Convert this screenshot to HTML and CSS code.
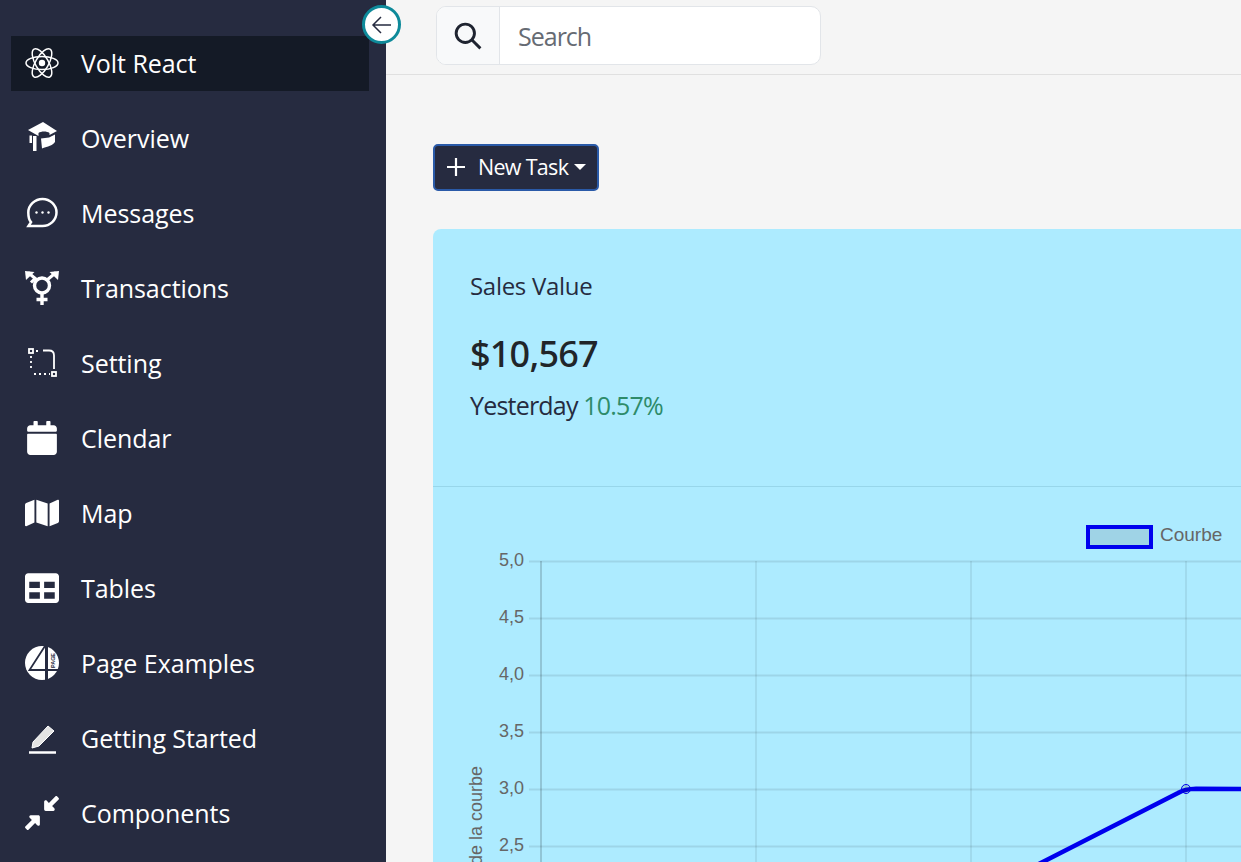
FILE: index.html
```html
<!DOCTYPE html>
<html lang="en">
<head>
  <meta charset="UTF-8" />
  <meta name="viewport" content="width=device-width, initial-scale=1.0" />
  <title>Volt React</title>
  <link rel="stylesheet" href="styles.css">
</head>
<body>

  <aside class="sidebar">
    <button class="sidebar-toggle" aria-label="Collapse">
      <svg viewBox="0 0 24 24" width="24" height="24" fill="none" stroke="#262b40" stroke-width="1.5">
        <path d="M21 12H3M11 4l-8 8 8 8" />
      </svg>
    </button>

    <nav class="nav-list">
      <a class="nav-item active" href="#">
        <svg class="nav-icon" viewBox="0 0 34 34" fill="none" stroke="#fff" stroke-width="1.5">
          <ellipse cx="17" cy="17" rx="16" ry="6.500" />
          <ellipse cx="17" cy="17" rx="16" ry="6.500" transform="rotate(60 17 17)" />
          <ellipse cx="17" cy="17" rx="16" ry="6.500" transform="rotate(120 17 17)" />
          <circle cx="17" cy="17" r="3.200" fill="#fff" stroke="none" />
        </svg>
        Volt React
      </a>
      <a class="nav-item" href="#">
        <svg class="nav-icon" viewBox="0 0 34 34" fill="#fff">
          <path d="M3 9L18 1 32 10 24.500 14V12C22 10 16 10 13.500 12V15z" />
          <path d="M16 17.500L24 16.500 30 13.500V21C26 26 20 26 17 27.500z" />
          <path d="M8 15h3.500v15H8z" />
          <path d="M4.500 14.500H7V22H4.500z" />
        </svg>
        Overview
      </a>
      <a class="nav-item" href="#">
        <svg class="nav-icon" viewBox="0 0 34 34" fill="none" stroke="#fff" stroke-width="2.500">
          <path d="M17.500 3C25 3 31.500 9 31.500 16.500S25 30 17.500 30H3.500l2.500-3.800C4 24 3.300 20.500 3.300 16.500 3.300 9 10 3 17.500 3z" />
          <g fill="#fff" stroke="none">
            <circle cx="11.500" cy="16.500" r="1.200" />
            <circle cx="17.500" cy="16.500" r="1.200" />
            <circle cx="23.500" cy="16.500" r="1.200" />
          </g>
        </svg>
        Messages
      </a>
      <a class="nav-item" href="#">
        <svg class="nav-icon" viewBox="0 0 34 34" fill="none" stroke="#fff" stroke-width="3.400">
          <circle cx="17" cy="14.500" r="7.500" />
          <path d="M17 22V34M11.500 28.500h11" />
          <path d="M12 9L3 1.500M22 9L31 1.500" stroke-width="3" />
          <path d="M6 11.500L11 6.500" stroke-width="3" />
          <g fill="#fff" stroke="none">
            <path d="M0 0L9.500 1 1 9z" />
            <path d="M34 0L24.500 1 33 9z" />
          </g>
        </svg>
        Transactions
      </a>
      <a class="nav-item" href="#">
        <svg class="nav-icon" viewBox="0 0 34 34" fill="none" stroke="#fff" stroke-width="1.800">
          <rect x="4" y="3" width="4" height="4" />
          <rect x="27" y="26" width="4" height="4" />
          <path d="M6 10v15" stroke-dasharray="2 3" />
          <path d="M9 28h16" stroke-dasharray="2 3" />
          <path d="M11 5h4" stroke-dasharray="2 3" />
          <path d="M18 4.500h6c3 0 5 2 5 5V23" />
        </svg>
        Setting
      </a>
      <a class="nav-item" href="#">
        <svg class="nav-icon" viewBox="0 0 448 512" fill="#fff">
          <path d="M12 192h424c6.600 0 12 5.400 12 12v260c0 26.500-21.500 48-48 48H48c-26.500 0-48-21.500-48-48V204c0-6.600 5.400-12 12-12zm436-44v-36c0-26.500-21.500-48-48-48h-48V12c0-6.600-5.400-12-12-12h-40c-6.600 0-12 5.400-12 12v52H160V12c0-6.600-5.400-12-12-12h-40c-6.600 0-12 5.400-12 12v52H48C21.500 64 0 85.500 0 112v36c0 6.600 5.400 12 12 12h424c6.600 0 12-5.400 12-12z" />
        </svg>
        Clendar
      </a>
      <a class="nav-item" href="#">
        <svg class="nav-icon" viewBox="0 0 576 512" fill="#fff">
          <path d="M0 117.660v346.320c0 11.320 11.430 19.060 21.940 14.860L160 416V32L20.120 87.950A32.006 32.006 0 0 0 0 117.660zM192 416l192 64V96L192 32v384zM554.060 33.160L416 96v384l139.880-55.950A31.996 31.996 0 0 0 576 394.340V48.020c0-11.320-11.430-19.060-21.940-14.860z" />
        </svg>
        Map
      </a>
      <a class="nav-item" href="#">
        <svg class="nav-icon" viewBox="0 0 512 512" fill="#fff">
          <path d="M464 32H48C21.490 32 0 53.490 0 80v352c0 26.510 21.490 48 48 48h416c26.510 0 48-21.490 48-48V80c0-26.510-21.490-48-48-48zM224 416H64v-96h160v96zm0-160H64v-96h160v96zm224 160H288v-96h160v96zm0-160H288v-96h160v96z" />
        </svg>
        Tables
      </a>
      <a class="nav-item" href="#">
        <svg class="nav-icon" viewBox="0 0 34 34">
          <circle cx="17" cy="17" r="17" fill="#fff" />
          <path d="M20 0L4.500 24H34" fill="none" stroke="#262b40" stroke-width="1.800" />
          <path d="M21.500 0V34" fill="none" stroke="#262b40" stroke-width="3" />
          <text class="page-mark" transform="translate(30 22) rotate(-90)">PAGE</text>
        </svg>
        Page Examples
      </a>
      <a class="nav-item" href="#">
        <svg class="nav-icon" viewBox="0 0 34 34">
          <path d="M8 21L23 5l6 5-15 15-7 2z" fill="#e4e4e4" stroke="#fff" stroke-width="1" />
          <path d="M4 31.500h27" stroke="#fff" stroke-width="2.500" />
        </svg>
        Getting Started
      </a>
      <a class="nav-item" href="#">
        <svg class="nav-icon" viewBox="0 0 512 512" fill="#fff">
          <path d="M200 288H88c-21.400 0-32.100 25.800-17 41l32.900 31-99.200 99.300c-6.200 6.200-6.200 16.400 0 22.600l25.400 25.400c6.200 6.200 16.400 6.200 22.600 0L152 408l31.100 33c15.100 15.100 40.900 4.400 40.900-17V312c0-13.300-10.700-24-24-24zm112-64h112c21.400 0 32.100-25.900 17-41l-33-31 99.300-99.300c6.200-6.200 6.200-16.400 0-22.600L481.900 4.700c-6.200-6.200-16.400-6.200-22.600 0L360 104l-31.100-33C313.800 55.900 288 66.600 288 88v112c0 13.300 10.700 24 24 24z" />
        </svg>
        Components
      </a>
    </nav>
  </aside>

  <main class="main">
    <header class="topbar">
      <div class="search">
        <span class="search-addon">
          <svg viewBox="0 0 26 26" width="28" height="28" fill="none" stroke="#1f2430" stroke-width="2.700">
            <circle cx="10.500" cy="10.500" r="8.500" />
            <path d="M16.500 16.500l8 8" />
          </svg>
        </span>
        <input class="search-input" type="text" placeholder="Search">
      </div>
    </header>

    <div class="content">
      <button class="task-btn">
        <svg viewBox="0 0 20 20" width="20" height="20" fill="none" stroke="#fff" stroke-width="2.200">
          <path d="M10 1v18M1 10h18" />
        </svg>
        <span class="task-label">New Task</span>
        <span class="caret"></span>
      </button>

      <section class="card">
        <div class="card-head">
          <h2 class="card-title">Sales Value</h2>
          <div class="card-value">$10,567</div>
          <div class="card-note">Yesterday <span class="up">10.57%</span></div>
        </div>

        <svg class="chart" viewBox="433 487 828 375" width="828" height="375">
          <g class="grid">
            <path d="M529 561.500H1261M529 618.500H1261M529 675.500H1261M529 732.500H1261M529 789.500H1261M529 846.500H1261" />
            <path class="grid-v" d="M756 561V862M971 561V862M1186 561V862" />
            <path class="axis" d="M541 561V862" />
          </g>
          <g class="ticks">
            <text x="524" y="566">5,0</text>
            <text x="524" y="623">4,5</text>
            <text x="524" y="680">4,0</text>
            <text x="524" y="737">3,5</text>
            <text x="524" y="794">3,0</text>
            <text x="524" y="851">2,5</text>
          </g>
          <text class="axis-title" transform="translate(482 766) rotate(-90)">Valeur de la courbe</text>
          <rect class="legend-box" x="1088" y="527" width="63" height="20" />
          <text class="legend-label" x="1160" y="541">Courbe</text>
          <path class="curve" d="M1029 869L1178 793C1183 790 1187 789 1196 788.800L1261 789" />
          <circle class="point" cx="1186" cy="789" r="4.500" />
        </svg>
      </section>
    </div>
  </main>

</body>
</html>
```

FILE: styles.css
```css
html, body {
  height: 100%;
}
body {
  margin: 0;
  font-family: 'Open Sans', 'Noto Sans', sans-serif;
  background: #f5f5f5;
  display: flex;
  overflow: hidden;
  color: #262b40;
}
.sidebar {
  position: relative;
  flex: 0 0 386px;
  box-sizing: border-box;
  padding: 36px 17px 0 11px;
  background: #262b40;
}
.sidebar-toggle {
  position: absolute;
  top: 5px;
  left: 362px;
  z-index: 2;
  width: 39px;
  height: 39px;
  padding: 0;
  display: flex;
  align-items: center;
  justify-content: center;
  background: #fff;
  border: 3px solid #0e8a9a;
  border-radius: 50%;
}
.nav-list {
  display: flex;
  flex-direction: column;
  gap: 20px;
}
.nav-item {
  display: flex;
  align-items: center;
  gap: 22px;
  height: 53px;
  padding: 0 0 2px 14px;
  color: #fff;
  font-size: 25px;
  letter-spacing: -0.05px;
  text-decoration: none;
}
.nav-item.active {
  background: #141a26;
}
.nav-icon {
  flex: 0 0 34px;
  width: 34px;
  height: 34px;
  overflow: visible;
}
.page-mark {
  font-family: 'Liberation Sans', sans-serif;
  font-size: 5.5px;
  font-weight: 700;
  fill: #262b40;
}
.main {
  flex: 1;
  min-width: 0;
  overflow: hidden;
}
.topbar {
  height: 74px;
  padding-left: 50px;
  border-bottom: 1px solid #e0e0e0;
}
.search {
  display: flex;
  width: 385px;
  height: 59px;
  box-sizing: border-box;
  position: relative;
  top: 6px;
  background: #fff;
  border: 1px solid #e2e5e9;
  border-radius: 10px;
  overflow: hidden;
}
.search-addon {
  flex: 0 0 62px;
  display: flex;
  align-items: center;
  justify-content: center;
  background: #f8f9fa;
  border-right: 1px solid #e2e5e9;
}
.search-input {
  flex: 1;
  min-width: 0;
  padding: 0 19px 0 18px;
  border: none;
  outline: none;
  background: transparent;
  font-family: inherit;
  font-size: 25px;
  letter-spacing: -1px;
}
.search-input::placeholder {
  color: #666b73;
  opacity: 1;
}
.content {
  padding: 69px 0 0 47px;
}
.task-btn {
  display: flex;
  align-items: center;
  width: 166px;
  height: 47px;
  padding: 0 0 2px 11px;
  background: #262b40;
  border: 2px solid #2a5aa8;
  border-radius: 5px;
  color: #fff;
  font-family: inherit;
  font-size: 21.5px;
  letter-spacing: -0.7px;
  white-space: nowrap;
  cursor: pointer;
}
.task-btn svg {
  flex: 0 0 20px;
  margin-right: 12px;
}
.caret {
  margin-left: 6px;
  border-top: 6px solid #fff;
  border-left: 6px solid transparent;
  border-right: 6px solid transparent;
}
.card {
  width: 828px;
  margin-top: 38px;
  background: #adebff;
  border-radius: 8px 0 0 0;
}
.card-head {
  height: 258px;
  box-sizing: border-box;
  padding: 40px 37px 0;
  border-bottom: 1px solid #98d6ea;
}
.card-title {
  margin: 0;
  font-size: 24px;
  line-height: 34px;
  font-weight: 400;
  letter-spacing: -0.3px;
}
.card-value {
  margin-top: 28px;
  font-family: 'Noto Sans', sans-serif;
  font-size: 36px;
  line-height: 46px;
  font-weight: 500;
  letter-spacing: -0.8px;
  color: #212529;
}
.card-note {
  margin-top: 11px;
  font-size: 25px;
  line-height: 34px;
  letter-spacing: -0.8px;
}
.up {
  color: #2e8b6a;
}
.chart {
  display: block;
}
.grid path {
  fill: none;
  stroke: rgba(0, 0, 0, 0.09);
  stroke-width: 2;
}
.grid .grid-v {
  stroke: rgba(0, 0, 0, 0.07);
}
.grid .axis {
  stroke: rgba(0, 0, 0, 0.16);
}
.ticks text {
  font-family: 'Liberation Sans', sans-serif;
  font-size: 18px;
  fill: #666;
  text-anchor: end;
}
.axis-title {
  font-family: 'Liberation Sans', sans-serif;
  font-size: 18px;
  fill: #666;
  text-anchor: end;
}
.legend-box {
  fill: #9fd3e6;
  stroke: #0000ee;
  stroke-width: 4;
}
.legend-label {
  font-family: 'Liberation Sans', sans-serif;
  font-size: 19px;
  fill: #666;
}
.curve {
  fill: none;
  stroke: #0000ee;
  stroke-width: 4.5;
}
.point {
  fill: rgba(0, 0, 0, 0.1);
  stroke: #0000ee;
  stroke-width: 1;
}
```
